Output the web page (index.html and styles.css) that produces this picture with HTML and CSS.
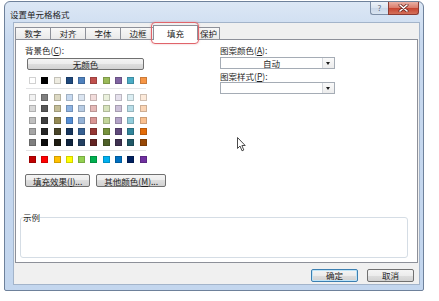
FILE: index.html
```html
<!DOCTYPE html>
<html lang="zh-CN">
<head>
<meta charset="UTF-8">
<title>设置单元格格式</title>
<link rel="stylesheet" href="styles.css">
</head>
<body>

<div class="window">
  <div class="titlebar">
    <span class="title">设置单元格格式</span>
    <div class="caption">
      <span class="cap-btn help">?</span>
      <span class="cap-btn close">
        <svg width="11" height="8" viewBox="0 0 11 8">
          <path d="M2 1 L9 7 M9 1 L2 7" stroke="#6b2a24" stroke-width="3" stroke-linecap="round"/>
          <path d="M2 1 L9 7 M9 1 L2 7" stroke="#ffffff" stroke-width="1.6" stroke-linecap="round"/>
        </svg>
      </span>
    </div>
  </div>

  <div class="dialog">
    <div class="tabs">
      <div class="tab">数字</div>
      <div class="tab">对齐</div>
      <div class="tab">字体</div>
      <div class="tab">边框</div>
      <div class="tab active">填充<span class="highlight"></span></div>
      <div class="tab narrow">保护</div>
    </div>

    <div class="panel">
      <div class="fill-row">
        <div class="bg-col">
          <div class="label">背景色(<u>C</u>):</div>
          <button class="btn no-color">无颜色</button>
          <div class="swatches" id="theme-base"></div>
          <div class="sep"></div>
          <div class="swatches tints" id="theme-tints"></div>
          <div class="sep"></div>
          <div class="swatches" id="standard"></div>
          <div class="btn-row">
            <button class="btn">填充效果(<u>I</u>)...</button>
            <button class="btn">其他颜色(<u>M</u>)...</button>
          </div>
        </div>

        <div class="pattern-col">
          <div class="label">图案颜色(<u>A</u>):</div>
          <div class="select">
            <span class="value">自动</span>
            <span class="arrow"></span>
          </div>
          <div class="label second">图案样式(<u>P</u>):</div>
          <div class="select second">
            <span class="value"></span>
            <span class="arrow"></span>
          </div>
        </div>
      </div>

      <fieldset class="sample">
        <legend>示例</legend>
      </fieldset>
    </div>

    <div class="actions">
      <button class="btn action default">确定</button>
      <button class="btn action">取消</button>
    </div>
  </div>

  <svg class="cursor" width="10" height="15" viewBox="0 0 10 15">
    <path d="M0.5 0.5 L0.5 11.5 L3 9 L5 13.8 L6.8 13 L4.9 8.5 L8.2 8.5 Z" fill="#ffffff" stroke="#4a4a4a" stroke-width="1" stroke-linejoin="round"/>
  </svg>
</div>

<script>
// Office theme colours, base row then tints/shades by row
var themeBase = ["#ffffff", "#000000", "#eeece1", "#1f497d", "#4f81bd", "#c0504d", "#9bbb59", "#8064a2", "#4bacc6", "#f79646"];
var themeTints = [
  "#f2f2f2", "#7f7f7f", "#ddd9c3", "#c6d9f0", "#dbe5f1", "#f2dcdb", "#ebf1dd", "#e5e0ec", "#dbeef3", "#fdeada",
  "#d8d8d8", "#595959", "#c4bd97", "#8db3e2", "#b8cce4", "#e5b9b7", "#d7e3bc", "#ccc1d9", "#b7dde8", "#fbd5b5",
  "#bfbfbf", "#3f3f3f", "#938953", "#548dd4", "#95b3d7", "#d99694", "#c3d69b", "#b2a2c7", "#92cddc", "#fac08f",
  "#a5a5a5", "#262626", "#494429", "#17365d", "#366092", "#953734", "#76923c", "#5f497a", "#31859b", "#e36c09",
  "#7f7f7f", "#0c0c0c", "#1d1b10", "#0f243e", "#244061", "#632423", "#4f6128", "#3f3151", "#205867", "#974806"
];
var standard = ["#c00000", "#ff0000", "#ffc000", "#ffff00", "#92d050", "#00b050", "#00b0f0", "#0070c0", "#002060", "#7030a0"];

function fillSwatches(id, colors) {
  var box = document.getElementById(id);
  for (var i = 0; i < colors.length; i++) {
    var s = document.createElement("span");
    s.className = "swatch";
    s.style.background = colors[i];
    box.appendChild(s);
  }
}

fillSwatches("theme-base", themeBase);
fillSwatches("theme-tints", themeTints);
fillSwatches("standard", standard);
</script>

</body>
</html>
```

FILE: styles.css
```css
body {
  margin: 0;
  background-color: #ffffff;
  font-family: "Noto Sans CJK SC", "Noto Sans", sans-serif;
  font-size: 8.5px;
  color: #1e1e1e;
}

u {
  text-decoration: underline;
}

.window {
  position: relative;
  box-sizing: border-box;
  width: 420px;
  height: 290px;
  margin: 1px 0 0 4px;
  border: 1px solid #6e819b;
  border-radius: 6px 6px 2px 2px;
  background: linear-gradient(#dce7f5, #c8d9ef 40px, #c3d6ee);
  display: flex;
  flex-direction: column;
}

/* title bar */
.titlebar {
  height: 20px;
  display: flex;
  align-items: center;
  padding-left: 5px;
}

.title {
  line-height: 10px;
  margin-top: 3px;
}

.caption {
  display: flex;
  align-self: flex-start;
  margin-left: auto;
  margin-right: 4px;
}

.cap-btn {
  box-sizing: border-box;
  height: 13px;
  display: flex;
  align-items: center;
  justify-content: center;
  border: 1px solid #7d8ea6;
  border-top: none;
}

.cap-btn.help {
  width: 18px;
  border-right: none;
  border-radius: 0 0 0 3px;
  background: linear-gradient(#eef3f9, #d9e3ef 50%, #c9d6e7 50%, #d9e4f1);
  color: #5a6880;
  font-size: 8px;
  line-height: 10px;
}

.cap-btn.close {
  width: 31px;
  border-color: #8c3b33;
  border-radius: 0 0 3px 0;
  background: linear-gradient(#eab1a5, #d97a69 50%, #c6422f 50%, #d4715a);
}

/* dialog body */
.dialog {
  box-sizing: border-box;
  height: 263px;
  margin: 0 3px 0 8px;
  padding: 4px 1px 2px;
  border: 1px solid #a3b4ca;
  background-color: #f0f0f0;
  display: flex;
  flex-direction: column;
}

.tabs {
  position: relative;
  z-index: 1;
  display: flex;
  height: 12px;
}

.tab {
  box-sizing: border-box;
  height: 12px;
  padding: 0 8.5px;
  margin-right: -1px;
  border: 1px solid #8d9099;
  border-bottom: none;
  line-height: 11px;
  background: linear-gradient(#f8f8f8, #e9e9e9);
}

.tab.active {
  position: relative;
  height: 15px;
  margin: -2px -1px 0 -2px;
  padding: 2px 13px 0;
  background: #ffffff;
}

.tab.narrow {
  padding: 0 2px;
}

.highlight {
  position: absolute;
  left: -3px;
  right: -2px;
  top: -4px;
  bottom: -4px;
  border: 1.5px solid #e0646a;
  border-radius: 4px;
  box-shadow: 0 0 2px rgba(224, 100, 106, 0.5);
}

.panel {
  flex: 1;
  border: 1px solid #8d9099;
  background-color: #ffffff;
  display: flex;
  flex-direction: column;
}

.fill-row {
  display: flex;
  gap: 55px;
  padding: 5px 0 0 9px;
}

.label {
  height: 10px;
  line-height: 10px;
  white-space: nowrap;
}

/* buttons */
.btn {
  box-sizing: border-box;
  height: 12px;
  padding: 0 7px;
  border: 1px solid #707070;
  border-radius: 2px;
  background: linear-gradient(#f4f4f4, #ececec 50%, #dedede 50%, #d2d2d2);
  font: inherit;
  line-height: 10px;
  color: #1e1e1e;
  white-space: nowrap;
}

.btn.no-color {
  display: block;
  width: 117px;
  margin: 3px 0 0 2px;
}

.bg-col {
  width: 140px;
}

.swatches {
  display: grid;
  grid-template-columns: repeat(10, 7px);
  column-gap: 5.3px;
  margin: 7px 0 0 4px;
}

.swatches.tints {
  row-gap: 4.3px;
  margin-top: 5px;
}

#standard {
  margin-top: 5px;
}

.swatch {
  box-sizing: border-box;
  width: 7px;
  height: 7px;
  border: 1px solid rgba(0, 0, 0, 0.18);
}

.sep {
  width: 120px;
  height: 1px;
  margin: 4px 0 0 1px;
  background-color: #e2e3e5;
}

.btn-row {
  display: flex;
  gap: 6px;
  margin-top: 11px;
}

.btn-row .btn {
  height: 13px;
}

/* pattern selects */
.pattern-col {
  width: 115px;
}

.select {
  box-sizing: border-box;
  height: 12px;
  margin-top: 2px;
  border: 1px solid #a5acb5;
  background-color: #ffffff;
  display: flex;
}

.select .value {
  flex: 1;
  text-align: center;
  line-height: 10px;
}

.select .arrow {
  position: relative;
  width: 11px;
  border-left: 1px solid #d4d7dc;
  background: linear-gradient(#fafafa, #ececec);
}

.select .arrow::after {
  content: "";
  position: absolute;
  left: 3px;
  top: 4px;
  border-left: 2.5px solid transparent;
  border-right: 2.5px solid transparent;
  border-top: 3px solid #1e1e1e;
}

.label.second {
  margin-top: 2px;
}

.select.second {
  margin-top: 1px;
}

/* sample box */
.sample {
  box-sizing: border-box;
  height: 46px;
  margin: auto 9px 4px 4px;
  padding: 0 2px;
  border: 1px solid #d5dde5;
  border-radius: 3px;
}

.sample legend {
  padding: 0;
  line-height: 10px;
}

.actions {
  display: flex;
  justify-content: flex-end;
  gap: 9px;
  margin-top: 6px;
  padding-right: 4px;
}

.btn.action {
  width: 47px;
  height: 13px;
  line-height: 11px;
}

.btn.default {
  border-color: #3c7fb1;
  box-shadow: inset 0 0 0 1px #bfe4f7;
}

.cursor {
  position: absolute;
  left: 232px;
  top: 135px;
}
```
